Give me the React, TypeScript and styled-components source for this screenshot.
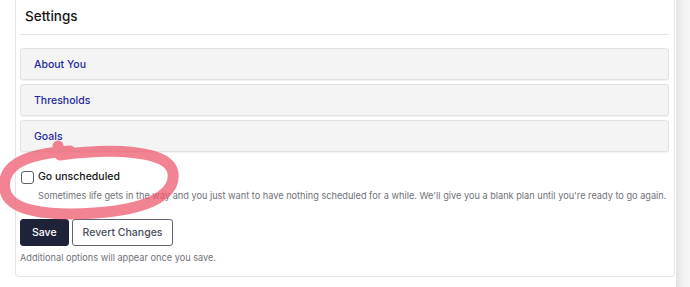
import React from "react";
import styled, { createGlobalStyle } from "styled-components";

const Global = createGlobalStyle`
  html, body { margin: 0; padding: 0; background: #fff; }
  body { font-family: Inter, "Noto Sans", sans-serif; -webkit-font-smoothing: antialiased; }
  * { box-sizing: border-box; }
`;

const Page = styled.div`
  display: flex;
  width: 690px;
  height: 287px;
  overflow: hidden;
  position: relative;
`;

const Main = styled.div`
  flex: 1;
  padding: 0 1px 0 15px;
`;

const Strip = styled.div`
  width: 14px;
  background: linear-gradient(to right, #e4e4e4, #f3f3f3 60%, #f6f6f6);
`;

const Card = styled.section`
  width: 660px;
  height: 277px;
  border: 1px solid #e3e5ea;
  border-top: none;
  border-radius: 0 0 4px 4px;
  padding: 0 4px;
  display: flex;
  flex-direction: column;
`;

const Header = styled.div`
  height: 35px;
  border-bottom: 1px solid #dfe4ee;
  display: flex;
  align-items: center;
  padding: 0 0 2px 5px;
  margin-right: 1px;
  font-size: 13.5px;
  font-weight: 500;
  color: #161616;
`;

const Accordions = styled.div`
  display: flex;
  flex-direction: column;
  gap: 4px;
  margin-top: 13px;
  margin-right: 1px;
`;

const AccordionItem = styled.div`
  height: 32px;
  background: #f4f4f4;
  border: 1px solid #e2e2e2;
  border-radius: 3px;
  box-shadow: 0 1px 1px rgba(0, 0, 0, 0.05);
  display: flex;
  align-items: center;
  padding-left: 13px;
  font-size: 10.5px;
  font-weight: 500;
  color: #1f2a9e;
`;

const CheckRow = styled.label`
  display: flex;
  align-items: center;
  gap: 4px;
  margin-top: 16px;
  padding-left: 1px;
  font-size: 10.5px;
  font-weight: 500;
  color: #151515;
`;

const Box = styled.span`
  width: 13px;
  height: 13px;
  border: 1.5px solid #5a5f6b;
  border-radius: 3px;
  background: #fff;
  margin-top: 3px;
`;

const Help = styled.p`
  margin: 6px 0 0 18px;
  font-size: 9.2px;
  color: #6f7278;
  white-space: nowrap;
`;

const Buttons = styled.div`
  display: flex;
  gap: 3px;
  margin-top: 18px;
`;

const Button = styled.button<{ $primary?: boolean }>`
  height: 27px;
  padding: 0 ${(p) => (p.$primary ? "11px" : "10px")};
  border-radius: 3px;
  font-family: Inter, "Noto Sans", sans-serif;
  font-size: 10.5px;
  font-weight: 500;
  cursor: pointer;
  background: ${(p) => (p.$primary ? "#1f2339" : "#fff")};
  color: ${(p) => (p.$primary ? "#fff" : "#4a4f5c")};
  border: 1.5px solid ${(p) => (p.$primary ? "#1f2339" : "#5f6573")};
`;

const Note = styled.p`
  margin: 6px 0 0 0;
  font-size: 9.2px;
  color: #6f7278;
`;

const Highlight = styled.svg`
  position: absolute;
  left: 0;
  top: 0;
  pointer-events: none;
`;

export default function App() {
  return (
    <>
      <Global />
      <Page>
        <Main>
          <Card>
            <Header>Settings</Header>
            <Accordions>
              <AccordionItem>About You</AccordionItem>
              <AccordionItem>Thresholds</AccordionItem>
              <AccordionItem>Goals</AccordionItem>
            </Accordions>
            <CheckRow>
              <Box />
              Go unscheduled
            </CheckRow>
            <Help>
              Sometimes life gets in the way and you just want to have nothing scheduled for a while. We'll give
              you a blank plan until you're ready to go again.
            </Help>
            <Buttons>
              <Button $primary>Save</Button>
              <Button>Revert Changes</Button>
            </Buttons>
            <Note>Additional options will appear once you save.</Note>
          </Card>
        </Main>
        <Strip />
        <Highlight width="690" height="287" viewBox="0 0 690 287">
          <path
            d="M 58 146 L 60 155 C 112 148, 170 150, 173 173 C 176 198, 140 210, 95 213 C 50 216, 9 212, 5 190 C 1 168, 20 154, 70 151"
            fill="none"
            stroke="#ee5a6e"
            strokeOpacity="0.75"
            strokeWidth="11"
            strokeLinecap="round"
            strokeLinejoin="round"
          />
        </Highlight>
      </Page>
    </>
  );
}
